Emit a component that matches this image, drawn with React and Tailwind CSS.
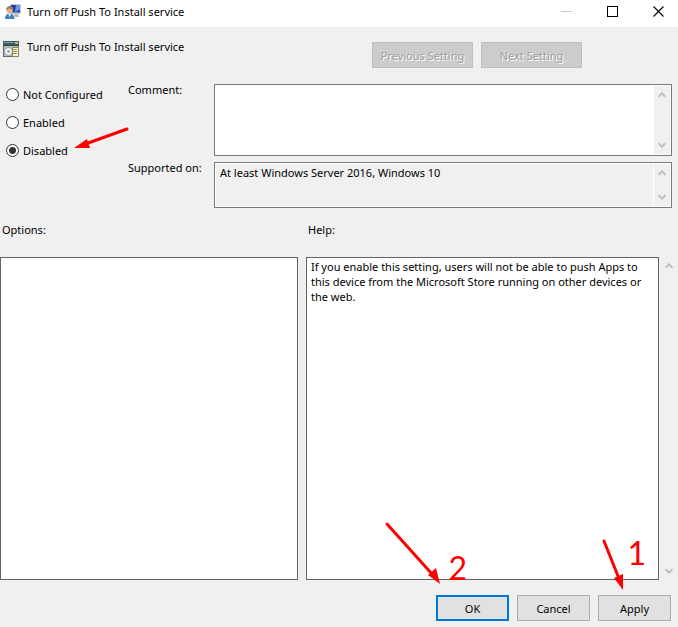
import React, { useState } from "react";

const STATES = ["Not Configured", "Enabled", "Disabled"];

const POLICY = {
  title: "Turn off Push To Install service",
  supportedOn: "At least Windows Server 2016, Windows 10",
  help: "If you enable this setting, users will not be able to push Apps to this device from the Microsoft Store running on other devices or the web.",
};

const WindowIcon = () => (
  <svg className="h-4 w-4 shrink-0" viewBox="0 0 16 16" aria-hidden="true">
    <rect x="5" y="0" width="11" height="10" rx="0.6" fill="#c9ccd2" />
    <rect x="6" y="1" width="9" height="7.5" fill="#1f3fae" />
    <path d="M11 1h4v4.500L10 8.500Z" fill="#6d92ea" />
    <path d="M9 10h4l1.500 3h-5Z" fill="#b5b9c0" />
    <path d="M0 15c0-3.500 1.500-5.500 4.500-5.500S9.500 11.500 9.500 15Z" fill="#3f83bd" />
    <path d="M3 9.500 4.700 13l1.700-3.500Z" fill="#e8f1f8" />
    <circle cx="4.700" cy="6.200" r="3.100" fill="#e3b48b" />
    <path d="M1.500 6.500C.9 3.500 2.600 2 4.800 2s3.600 1.500 3.100 3.500C6 5.300 4.500 5 3.400 4.500 3 5.300 2.400 6.200 1.500 6.500Z" fill="#9b7c5c" />
  </svg>
);

const PolicyIcon = () => (
  <svg className="h-4 w-4 shrink-0" viewBox="0 0 16 16" shapeRendering="crispEdges" aria-hidden="true">
    <rect width="16" height="16" fill="#5f6b6d" />
    <rect x="0" y="0" width="16" height="5" fill="#3d5f68" />
    <rect x="1" y="1" width="10" height="1" fill="#7fa3a8" />
    <rect x="12" y="1" width="3" height="2" fill="#d8c15d" />
    <rect x="1" y="4" width="14" height="1" fill="#2f4247" />
    <rect x="1" y="5" width="14" height="10" fill="#b9bfbf" />
    <g shapeRendering="auto">
      <circle cx="5.500" cy="10.500" r="4" fill="#f2f3f3" stroke="#8f9696" strokeWidth="0.8" />
      <circle cx="5.500" cy="10.500" r="1.200" fill="#82898a" />
    </g>
    <rect x="9" y="6" width="6" height="9" fill="#fbf7e4" stroke="#8c8555" />
    <path d="M10 8.500h4M10 10.500h4M10 12.500h4" stroke="#a49045" />
  </svg>
);

const Chevron = ({ down }) => (
  <svg className={down ? "h-[6px] w-2 rotate-180" : "h-[6px] w-2"} viewBox="0 0 8 6" aria-hidden="true">
    <path d="M0.500 4.800 4 1.300l3.500 3.500" fill="none" stroke="#bfbfbf" strokeWidth="2" />
  </svg>
);

const ScrollBar = ({ className }) => (
  <div className={`flex shrink-0 flex-col items-center justify-between bg-[#f0f0f0] py-[6px] ${className}`}>
    <Chevron />
    <Chevron down />
  </div>
);

const NavButton = ({ children }) => (
  <button
    type="button"
    disabled
    className="h-[26px] w-[101px] border border-[#bfbfbf] bg-[#cccccc] text-[#a0a0a0] [text-shadow:1px_1px_0_#fff]"
  >
    {children}
  </button>
);

const DialogButton = ({ primary, children }) => (
  <button
    type="button"
    className={`h-[26px] w-[73px] bg-[#e1e1e1] ${
      primary ? "border-2 border-[#0078d7]" : "border border-[#adadad]"
    }`}
  >
    {children}
  </button>
);

const App = () => {
  const [state, setState] = useState("Disabled");
  const [comment, setComment] = useState("");

  return (
    <div className="flex min-h-screen flex-col bg-[#f0f0f0] font-['Noto_Sans',sans-serif] text-[11px] leading-[15px] text-black">
      {/* Title bar */}
      <header className="flex h-[27px] items-center bg-white pr-[14px] pb-[4px] pl-[5px]">
        <WindowIcon />
        <h1 className="ml-[6px] flex-1">{POLICY.title}</h1>
        <div className="flex gap-[35px]">
          <button type="button" aria-label="Minimize" className="h-[11px] w-[11px]">
            <svg viewBox="0 0 11 11" className="block" aria-hidden="true">
              <path d="M0 5.500h11" stroke="#c8c8c8" />
            </svg>
          </button>
          <button type="button" aria-label="Maximize" className="h-[11px] w-[11px]">
            <svg viewBox="0 0 11 11" className="block" aria-hidden="true">
              <rect x="0.500" y="0.500" width="10" height="10" fill="none" stroke="#000" />
            </svg>
          </button>
          <button type="button" aria-label="Close" className="h-[11px] w-[11px]">
            <svg viewBox="0 0 11 11" className="block" aria-hidden="true">
              <path d="m0.500 0.500 10 10m0-10-10 10" stroke="#000" strokeWidth="1.100" />
            </svg>
          </button>
        </div>
      </header>

      {/* Policy name and navigation */}
      <div className="flex items-start pt-[14px] pr-[96px] pl-[3px]">
        <PolicyIcon />
        <h2 className="ml-2 flex-1 leading-3">{POLICY.title}</h2>
        <div className="flex gap-2 pt-px">
          <NavButton>Previous Setting</NavButton>
          <NavButton>Next Setting</NavButton>
        </div>
      </div>

      {/* State, comment and supported platforms */}
      <div className="mt-4 flex pr-[6px] pl-[6px]">
        <fieldset className="relative w-[122px] shrink-0">
          {STATES.map((name) => (
            <label key={name} className="mb-2 flex h-5 items-center gap-1">
              <input
                type="radio"
                name="state"
                value={name}
                checked={state === name}
                onChange={() => setState(name)}
                className="h-[13px] w-[13px] appearance-none rounded-full border border-[#333] bg-white checked:bg-[radial-gradient(circle,#333_3px,#fff_4px)]"
              />
              {name}
            </label>
          ))}
          <svg className="absolute top-[42px] left-[68px] h-6 w-14" viewBox="0 0 56 24" aria-hidden="true">
            <path d="M53 3 10 18.500" stroke="#f00" strokeWidth="3" strokeLinecap="round" />
            <path d="M0 22 13 13l3 9Z" fill="#f00" />
          </svg>
        </fieldset>

        <div className="grid flex-1 grid-cols-[86px_1fr] gap-y-[6px]">
          <label htmlFor="comment" className="leading-3">Comment:</label>
          <div className="flex h-[72px] border border-[#7a7a7a] bg-white p-px">
            <textarea
              id="comment"
              value={comment}
              onChange={(e) => setComment(e.target.value)}
              className="min-w-0 flex-1 resize-none px-1 outline-none"
            />
            <ScrollBar className="w-4" />
          </div>
          <label htmlFor="supported" className="leading-3">Supported on:</label>
          <div className="flex h-[46px] border border-[#7a7a7a] bg-white p-px">
            <textarea
              id="supported"
              readOnly
              value={POLICY.supportedOn}
              className="mr-px min-w-0 flex-1 resize-none overflow-hidden bg-[#f0f0f0] px-1 pt-px outline-none"
            />
            <ScrollBar className="w-4" />
          </div>
        </div>
      </div>

      {/* Options and help panes */}
      <div className="mt-[14px] grid flex-1 grid-cols-[298fr_372fr] grid-rows-[auto_1fr] gap-x-2 gap-y-5">
        <h3 className="pl-[2px]">Options:</h3>
        <h3 className="pl-[2px]">Help:</h3>
        <section className="border border-[#646464] bg-white" />
        <section className="flex">
          <p className="flex-1 border border-[#646464] bg-white px-1 py-px">{POLICY.help}</p>
          <ScrollBar className="w-[19px]" />
        </section>
      </div>

      {/* Dialog buttons with the numbered steps */}
      <footer className="relative flex justify-end gap-2 pt-[15px] pr-[7px] pb-[6px]">
        <DialogButton primary>OK</DialogButton>
        <DialogButton>Cancel</DialogButton>
        <DialogButton>Apply</DialogButton>
        <div className="pointer-events-none absolute right-[211px] bottom-[43px] flex h-[64px] text-[#f00]">
          <svg className="h-[64px] w-[60px]" viewBox="0 0 60 64" aria-hidden="true">
            <path d="m3 4 45 50" stroke="#f00" strokeWidth="3" strokeLinecap="round" />
            <path d="m56 64-12-9 8-7Z" fill="#f00" />
          </svg>
          <span className="self-end pl-1 font-['Lato',sans-serif] text-[32px] leading-8">2</span>
        </div>
        <div className="pointer-events-none absolute right-[32px] bottom-[37px] flex h-[53px] text-[#f00]">
          <svg className="h-[53px] w-[27px]" viewBox="0 0 27 53" aria-hidden="true">
            <path d="m4 4 14 35" stroke="#f00" strokeWidth="3" strokeLinecap="round" />
            <path d="m23 53-9-12 9-4Z" fill="#f00" />
          </svg>
          <span className="font-['Lato',sans-serif] text-[32px] leading-8">1</span>
        </div>
      </footer>
    </div>
  );
};

export default App;
